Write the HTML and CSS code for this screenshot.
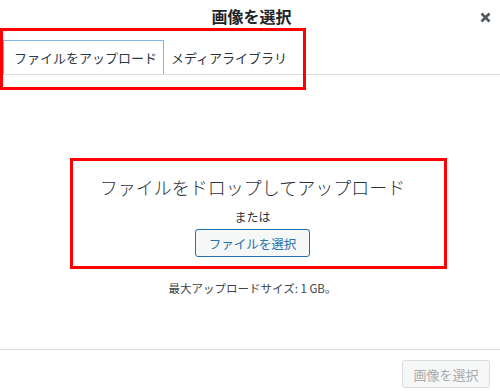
FILE: index.html
```html
<!DOCTYPE html>
<html lang="ja">
<head>
    <meta charset="UTF-8">
    <title>画像を選択</title>
    <link rel="stylesheet" href="styles.css">
</head>
<body>
<div class="modal">
    <div class="modal-header">
        <span></span>
        <h1>画像を選択</h1>
        <button type="button" class="close" aria-label="閉じる">
            <svg width="11" height="11" viewBox="0 0 11 11"><path d="M1.5 1.5 L9.5 9.5 M9.5 1.5 L1.5 9.5" stroke="#50575e" stroke-width="2.6"/></svg>
        </button>
    </div>
    <div class="tabs">
        <button type="button" class="tab active">ファイルをアップロード</button>
        <button type="button" class="tab">メディアライブラリ</button>
    </div>
    <div class="uploader">
        <p class="drop-title">ファイルをドロップしてアップロード</p>
        <p class="or">または</p>
        <button type="button" class="btn-secondary">ファイルを選択</button>
        <p class="max-size">最大アップロードサイズ: 1 GB。</p>
    </div>
    <div class="toolbar">
        <button type="button" class="btn-primary" disabled>画像を選択</button>
    </div>
</div>
<!-- 注釈の赤枠 -->
<div class="mark mark-tabs"></div>
<div class="mark mark-drop"></div>
</body>
</html>
```

FILE: styles.css
```css
html { font-size: 13px; }
body { margin: 0; background: #fff; font-family: "Noto Sans CJK JP", "Liberation Sans", sans-serif; color: #1d2327; }
.modal { width: 500px; height: 391px; display: flex; flex-direction: column; }
.modal-header { height: 33px; display: grid; grid-template-columns: 1fr auto 1fr; align-items: center; }
.modal-header h1 { margin: 0 0 0 3px; font-size: 16px; font-weight: 700; line-height: 33px; color: #1d2327; }
.close { justify-self: end; margin-right: 9px; margin-top: 1px; width: 11px; height: 11px; padding: 0; border: none; background: none; display: flex; }
.tabs { margin-top: 7px; padding-left: 3px; display: flex; border-bottom: 1px solid #dcdcde; }
.tab {
    height: 34px;
    padding: 0 6px;
    border: 1px solid transparent;
    border-bottom: none;
    background: none;
    font-family: inherit;
    font-size: 13px;
    color: #2c3338;
}
.tab.active { border-color: #82b4e2; padding: 0 6px 0 10px; color: #2a3a4a; }
.uploader { flex: 1; display: flex; flex-direction: column; align-items: center; padding-top: 100px; padding-left: 5px; }
.uploader p { margin: 0; }
.drop-title { font-size: 18px; line-height: 24px; color: #2c3338; font-weight: 300; }
.or { font-size: 12px; line-height: 18px; margin-top: 9px !important; color: #2c3338; }
.btn-secondary {
    margin-top: 3px;
    height: 28px;
    padding: 0 13px;
    font-family: inherit;
    font-size: 12.5px;
    color: #2271b1;
    background: #f6f7f7;
    border: 1px solid #2271b1;
    border-radius: 3px;
}
.max-size { margin-top: 23px !important; margin-left: -5px; font-size: 11.5px; line-height: 16px; color: #3c434a; }
.toolbar { height: 42px; border-top: 1px solid #dcdcde; display: flex; justify-content: flex-end; align-items: flex-start; padding: 10px 10px 0 0; box-sizing: border-box; }
.btn-primary {
    width: 88px;
    height: 28px;
    font-family: inherit;
    font-size: 13px;
    color: #a7aaad;
    background: #f6f7f7;
    border: 1px solid #dcdcde;
    border-radius: 3px;
}
.mark { position: absolute; border: 3px solid #f00; box-sizing: border-box; }
.mark-tabs { left: 0; top: 28px; width: 306px; height: 62px; }
.mark-drop { left: 70px; top: 158px; width: 377px; height: 111px; }
```
